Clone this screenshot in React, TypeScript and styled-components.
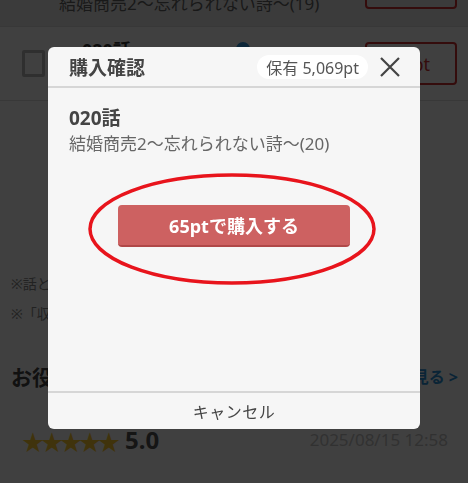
import React from "react";
import styled, { createGlobalStyle } from "styled-components";

const GlobalStyle = createGlobalStyle`
  html, body {
    margin: 0;
    padding: 0;
    background: #ffffff;
    overflow: hidden;
  }
  body {
    font-family: "Noto Sans", "Noto Sans CJK JP", sans-serif;
    color: #333;
  }
`;

const Page = styled.div`
  width: 468px;
  height: 483px;
  overflow: hidden;
`;

const Scroller = styled.div`
  margin-top: -52px;
`;

const EpisodeRow = styled.div<{ $height: number; $tint?: boolean }>`
  height: ${(p) => p.$height}px;
  box-sizing: border-box;
  display: flex;
  align-items: center;
  padding: 0 11px 0 22px;
  gap: 14px;
  border-bottom: 1px solid #dddddd;
  background: ${(p) => (p.$tint ? "#ececec" : "#ffffff")};
`;

const Checkbox = styled.div`
  width: 23px;
  height: 27px;
  box-sizing: border-box;
  border: 3px solid #bbbbbb;
  border-radius: 2px;
  flex-shrink: 0;
`;

const EpisodeInfo = styled.div<{ $indent: number }>`
  flex: 1;
  display: flex;
  flex-direction: column;
  padding-left: ${(p) => p.$indent}px;
  gap: 4px;
`;

const EpisodeTitle = styled.div`
  display: flex;
  align-items: center;
  gap: 10px;
  font-size: 18px;
  font-weight: 700;
  color: #333;
`;

const BlueDot = styled.span`
  width: 14px;
  height: 14px;
  border-radius: 50%;
  background: #3399dd;
  margin-left: 95px;
`;

const EpisodeSub = styled.div`
  font-size: 17px;
  color: #666;
  white-space: nowrap;
`;

const OutlineButton = styled.div`
  width: 92px;
  height: 43px;
  box-sizing: border-box;
  border: 2px solid #d03030;
  border-radius: 4px;
  color: #d03030;
  font-size: 18px;
  display: flex;
  align-items: center;
  justify-content: center;
  flex-shrink: 0;
`;

const Notes = styled.div`
  padding: 172px 11px 0;
  display: flex;
  flex-direction: column;
  gap: 10px;
  font-size: 14px;
  color: #888;
`;

const SectionHead = styled.div`
  display: flex;
  justify-content: space-between;
  align-items: center;
  padding: 38px 10px 0 11px;
`;

const SectionTitle = styled.div`
  font-size: 21px;
  font-weight: 700;
  color: #444;
`;

const MoreLink = styled.div`
  font-size: 16px;
  font-weight: 700;
  color: #2a8fd6;
`;

const ReviewRow = styled.div`
  display: flex;
  justify-content: space-between;
  align-items: center;
  padding: 32px 20px 0 22px;
`;

const Rating = styled.div`
  display: flex;
  align-items: center;
  gap: 8px;
  font-size: 24px;
  font-weight: 700;
  color: #555;
`;

const Stars = styled.span`
  color: #ffcc33;
  font-size: 22px;
  letter-spacing: -3px;
`;

const DateText = styled.div`
  font-size: 17px;
  color: #c4c4c4;
`;

const Overlay = styled.div`
  position: fixed;
  inset: 0;
  background: rgba(0, 0, 0, 0.75);
  display: flex;
  justify-content: center;
  align-items: flex-start;
  padding-top: 47px;
`;

const Modal = styled.div`
  width: 372px;
  height: 382px;
  background: #f6f6f6;
  border-radius: 6px;
  display: flex;
  flex-direction: column;
  overflow: hidden;
`;

const ModalHeader = styled.div`
  height: 39px;
  display: flex;
  align-items: center;
  padding: 0 20px 0 21px;
  border-bottom: 2px solid #d6d6d6;
`;

const ModalTitle = styled.div`
  flex: 1;
  font-size: 19px;
  font-weight: 700;
  color: #444;
`;

const Balance = styled.div`
  height: 24px;
  padding: 0 9px;
  border-radius: 12px;
  background: #ffffff;
  display: flex;
  align-items: center;
  font-size: 16px;
  color: #555;
  margin-right: 12px;
`;

const CloseButton = styled.button`
  width: 20px;
  height: 20px;
  padding: 0;
  border: none;
  background: none;
  display: flex;
`;

const ModalBody = styled.div`
  flex: 1;
  padding: 17px 21px 0;
  display: flex;
  flex-direction: column;
`;

const ItemTitle = styled.div`
  font-size: 19px;
  font-weight: 700;
  line-height: 27px;
  color: #444;
`;

const ItemSub = styled.div`
  font-size: 17px;
  line-height: 24px;
  color: #666;
  white-space: nowrap;
`;

const BuyArea = styled.div`
  position: relative;
  display: flex;
  justify-content: center;
  margin-top: 49px;
`;

const BuyButton = styled.button`
  width: 232px;
  height: 42px;
  border: none;
  border-bottom: 2px solid #b04848;
  border-radius: 4px;
  background: #cd6161;
  color: #ffffff;
  font-family: inherit;
  font-size: 18px;
  font-weight: 700;
`;

const Annotation = styled.svg`
  position: absolute;
  left: 17px;
  top: -33px;
  pointer-events: none;
`;

const ModalFooter = styled.div`
  height: 36px;
  border-top: 2px solid #d6d6d6;
  display: flex;
  align-items: center;
  justify-content: center;
  font-size: 16px;
  color: #444;
  letter-spacing: 0.5px;
`;

export default function App() {
  return (
    <Page>
      <GlobalStyle />
      <Scroller>
        <EpisodeRow $height={79} $tint>
          <EpisodeInfo $indent={37}>
            <EpisodeTitle>019話</EpisodeTitle>
            <EpisodeSub>結婚商売2〜忘れられない詩〜(19)</EpisodeSub>
          </EpisodeInfo>
          <OutlineButton>65pt</OutlineButton>
        </EpisodeRow>
        <EpisodeRow $height={74}>
          <Checkbox />
          <EpisodeInfo $indent={23}>
            <EpisodeTitle>
              020話<BlueDot />
            </EpisodeTitle>
            <EpisodeSub>結婚商売2〜忘れられない詩〜(20)</EpisodeSub>
          </EpisodeInfo>
          <OutlineButton>65pt</OutlineButton>
        </EpisodeRow>
        <Notes>
          <div>※話と巻は別の商品です。</div>
          <div>※「収録話」をご確認ください。</div>
        </Notes>
        <SectionHead>
          <SectionTitle>お役立ちレビュー</SectionTitle>
          <MoreLink>もっと見る &gt;</MoreLink>
        </SectionHead>
        <ReviewRow>
          <Rating>
            <Stars>★★★★★</Stars>
            5.0
          </Rating>
          <DateText>2025/08/15 12:58</DateText>
        </ReviewRow>
      </Scroller>

      <Overlay>
        <Modal>
          <ModalHeader>
            <ModalTitle>購入確認</ModalTitle>
            <Balance>保有 5,069pt</Balance>
            <CloseButton aria-label="閉じる">
              <svg width="20" height="20" viewBox="0 0 20 20">
                <path d="M1 1L19 19M19 1L1 19" stroke="#444" strokeWidth="2.2" />
              </svg>
            </CloseButton>
          </ModalHeader>
          <ModalBody>
            <ItemTitle>020話</ItemTitle>
            <ItemSub>結婚商売2〜忘れられない詩〜(20)</ItemSub>
            <BuyArea>
              <BuyButton>65ptで購入する</BuyButton>
              <Annotation width="294" height="114" viewBox="0 0 294 114">
                <ellipse cx="146" cy="57" rx="142" ry="54" fill="none" stroke="#e8141c" strokeWidth="3.5" />
              </Annotation>
            </BuyArea>
          </ModalBody>
          <ModalFooter>キャンセル</ModalFooter>
        </Modal>
      </Overlay>
    </Page>
  );
}
